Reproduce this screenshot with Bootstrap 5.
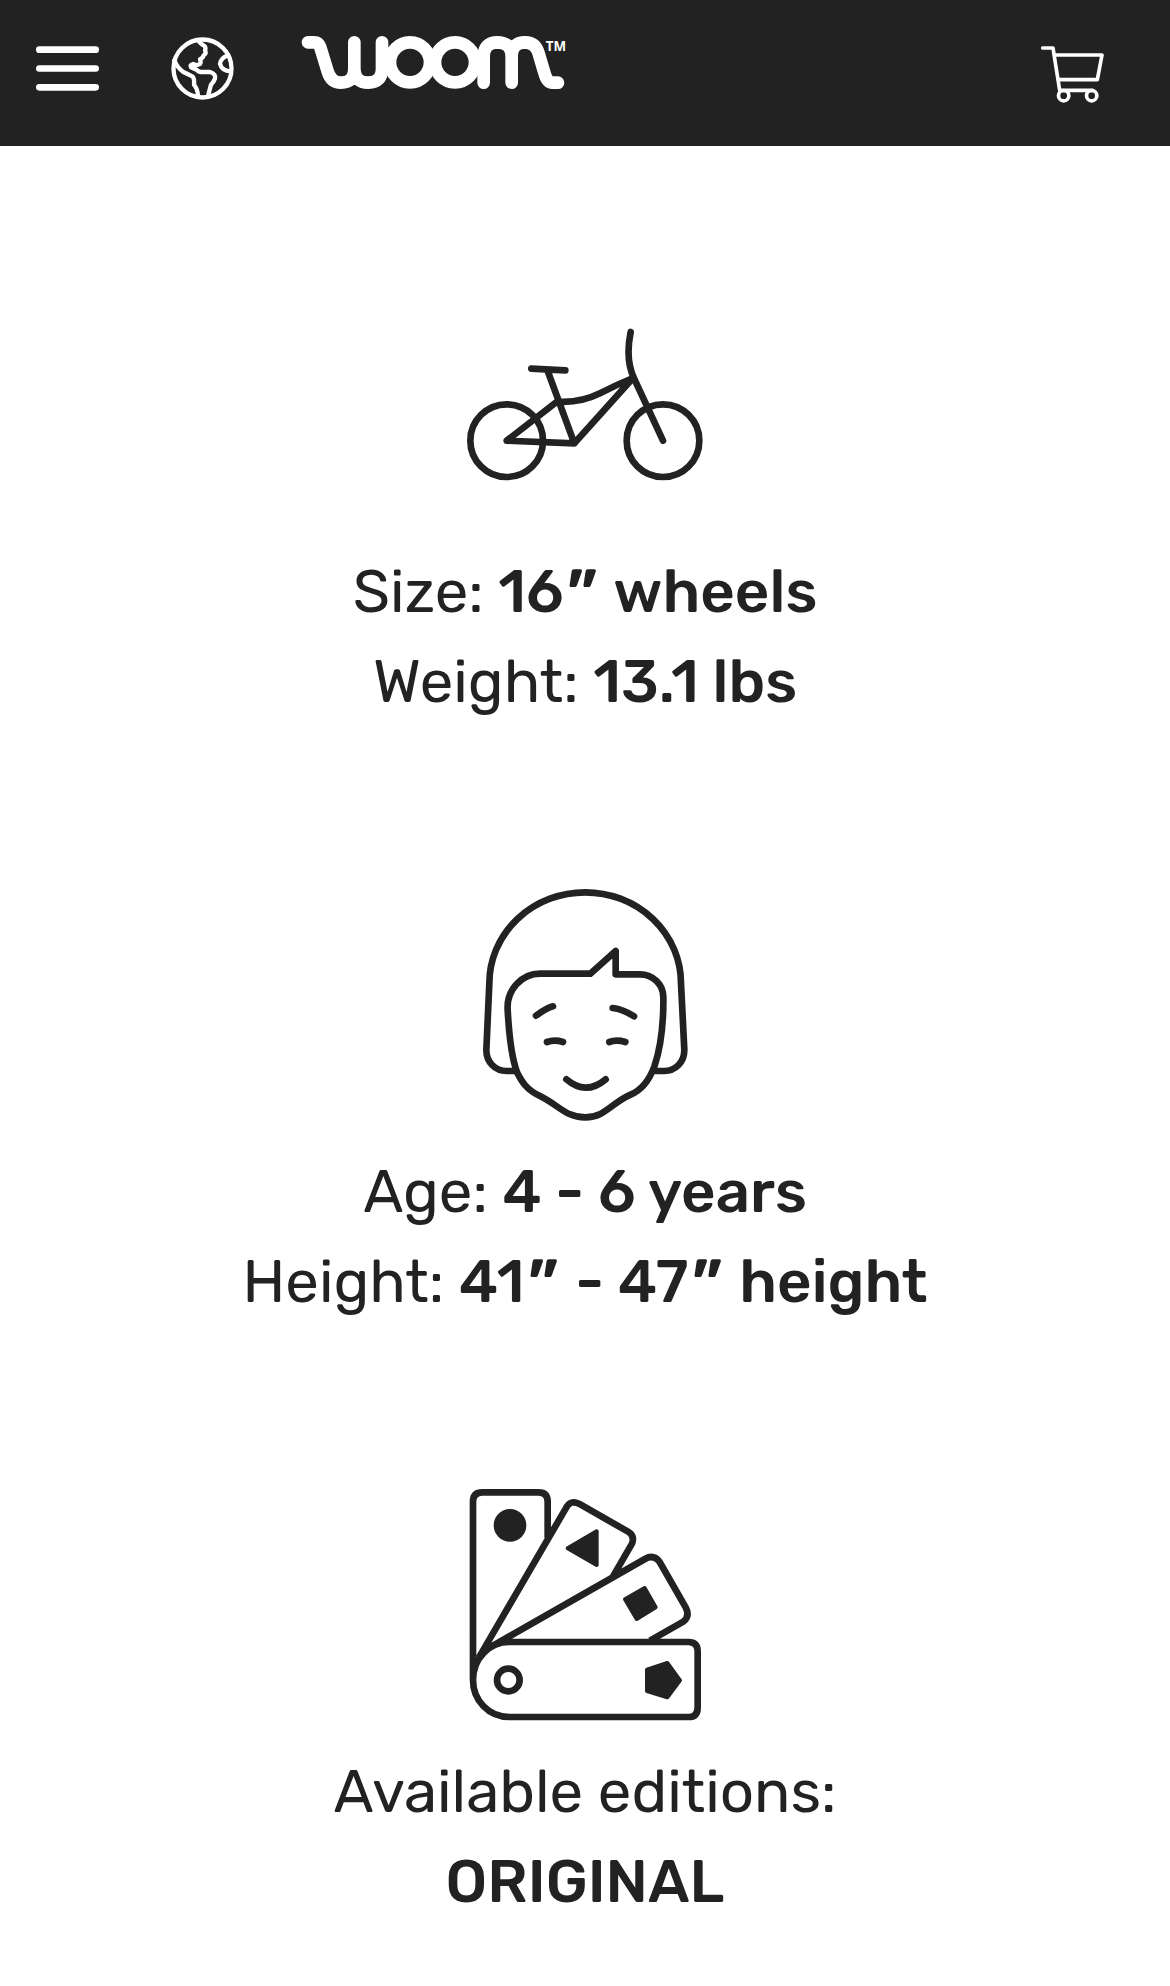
<!DOCTYPE html>
<html lang="en">
<head>
<meta charset="utf-8">
<meta name="viewport" content="width=device-width, initial-scale=1">
<title>woom</title>
<link href="https://cdn.jsdelivr.net/npm/bootstrap@5.3.0/dist/css/bootstrap.min.css" rel="stylesheet">
<style>
body{font-family:Rubik,Roboto,sans-serif;color:#222;background:#fff}
.site-bar{height:146px;background:#222;padding:20px 0 0 20px}
.site-bar svg{display:block;flex:none}
.logo-link{margin-left:30px}
.specs{padding-top:124px}
.spec{height:600px}
.spec svg{display:block;width:270px;height:270px;margin-bottom:6.5px}
.spec p{font-size:60px;line-height:90px;white-space:nowrap}
.spec strong{font-weight:500}
.inch{display:inline-block;line-height:1;margin:0 5.4px 0 5.6px;transform:scale(1.22,1.33);transform-origin:50% 8px}
.ln{fill:none;stroke:#222;stroke-width:20;stroke-linecap:round;stroke-linejoin:round}
.flat{stroke-linecap:butt}
.wt{fill:none;stroke:#fff;stroke-linecap:round;stroke-linejoin:round}
</style>
</head>
<body>
<header class="site-bar d-flex align-items-start">
  <a href="#" aria-label="Menu"><svg width="120" height="110" viewBox="0 0 360 330"><path class="wt" stroke-width="20" d="M58 89H227M58 145.500H227M58 202H227"/></svg></a>
  <a href="#" aria-label="Region"><svg width="120" height="110" viewBox="360 0 360 330"><g class="wt" stroke-width="13"><circle cx="547.500" cy="145.500" r="87"/><path d="M537 65Q544 73 552 77Q559 83 555 92Q560 101 551 106Q549 114 540 118Q544 126 540 132Q530 138 519 132Q508 135 513 142L531 150Q536 157 546 156H570Q588 161 585 176Q581 186 573 194L564 228M463 121Q472 144 490 156Q505 163 517 169Q524 176 522 194Q532 204 534 226M625 105Q602 114 600 131Q605 153 633 154"/></g></svg></a>
  <a href="#" class="logo-link" aria-label="woom"><svg width="290" height="90" viewBox="0 0 870 270"><g class="wt" stroke-width="38"><path d="M54 67H72Q86 67 91 82L113 154Q123 188 153 188Q193 187 193 147V67M193 147Q194 188 235 188Q276 187 276 147V67M581 188V108Q583 67 622 67Q664 68 665 108V188M665 108Q666 67 705 67Q736 68 745 97L763 158Q771 188 787 188H804"/><circle cx="360" cy="127" r="60"/><circle cx="495" cy="127" r="60"/></g><text x="767" y="93" font-size="43" font-weight="700" fill="#fff" textLength="61" lengthAdjust="spacingAndGlyphs" font-family="Open Sans, sans-serif">TM</text></svg></a>
  <a href="#" class="ms-auto" aria-label="Cart"><svg width="150" height="110" viewBox="0 0 450 330"><g class="wt" stroke-width="11"><path d="M68 84H99L119 211H218M105 105H246L232 179H114"/><circle cx="131" cy="227" r="15.500"/><circle cx="215" cy="227" r="15.500"/></g></svg></a>
</header>
<main class="specs text-center">
  <section class="spec d-flex flex-column align-items-center">
    <svg viewBox="0 0 810 810"><g class="ln" transform="translate(0 120)"><circle cx="170" cy="392" r="109"/><circle cx="639" cy="392" r="109"/><path d="M244 176L346 181M293 183L373 400L170 392L321 275Q390 280 450 250Q498 225 549 204L373 400M542 66Q525 150 553 207L639 392"/></g></svg>
    <p class="mb-0">Size: <strong>16<span class="inch">”</span> wheels</strong><br>Weight: <strong>13.1 lbs</strong></p>
  </section>
  <section class="spec d-flex flex-column align-items-center">
    <svg viewBox="0 0 810 810"><g class="ln" transform="translate(30 0)"><path d="M168 603H140C105 603 79 576 79 540L88 340A287.500 273 0 0 1 663 340L673 540C673 576 647 603 612 603H588"/><path d="M240 311H391L467 243V313H540C580 313 610 345 610 382C611 470 603 530 583 590C568 630 545 660 512 674C455 698 435 742 376 742C317 742 297 706 240 678C200 660 185 635 171 607C154 560 147 495 143 420C139 360 185 311 240 311ZM228 437Q260 414 279 409M458 414Q490 418 522 439M261 516Q283 508 309 516M448 516Q470 508 496 516M319 628Q377 678 437 628"/></g></svg>
    <p class="mb-0">Age: <strong>4 - 6 years</strong><br>Height: <strong>41<span class="inch">”</span> - 47<span class="inch">”</span> height</strong></p>
  </section>
  <section class="spec d-flex flex-column align-items-center">
    <svg viewBox="0 0 810 810"><g class="ln flat"><path d="M69 630V95Q69 67 97 67H266Q293 67 293 95V203M87 562L347 116Q360 88 387 101L534 185Q555 197 546 221L489 319M120 532L585 267Q611 252 629 276L707 412Q721 438 700 455L600 512M175 516H715Q743 516 743 544V713Q743 741 715 741H178C115 741 69 690 69 630C69 565 118 516 178 516"/><circle cx="175" cy="630" r="34"/></g><g fill="#222" stroke="#222" stroke-width="12" stroke-linejoin="round"><circle cx="180" cy="166" r="43"/><path d="M353 235L440 184V285ZM525 388L584 354L617 412L560 447ZM591 599L652 579L690 631L652 682L591 663Z"/></g></svg>
    <p class="mb-0">Available editions:<br><strong>ORIGINAL</strong></p>
  </section>
</main>
<script src="https://cdn.jsdelivr.net/npm/bootstrap@5.3.0/dist/js/bootstrap.bundle.min.js"></script>
</body>
</html>
